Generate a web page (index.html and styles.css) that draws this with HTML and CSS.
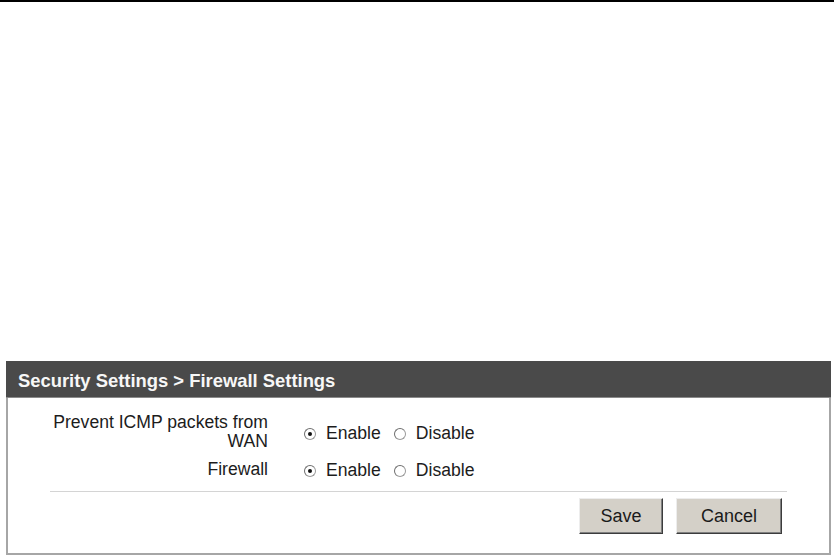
FILE: index.html
```html
<!DOCTYPE html>
<html>
<head>
<meta charset="utf-8">
<title>Firewall Settings</title>
<link rel="stylesheet" href="styles.css">
</head>
<body>
<div class="topline"></div>
<div class="panel">
  <div class="panel-header">Security Settings &gt; Firewall Settings</div>
  <div class="panel-body">
    <div class="rows">
      <div class="form-row">
        <div class="label">Prevent ICMP packets from WAN</div>
        <div class="controls">
          <label class="opt"><span class="radio checked"></span>Enable</label>
          <label class="opt"><span class="radio"></span>Disable</label>
        </div>
      </div>
      <div class="form-row">
        <div class="label">Firewall</div>
        <div class="controls">
          <label class="opt"><span class="radio checked"></span>Enable</label>
          <label class="opt"><span class="radio"></span>Disable</label>
        </div>
      </div>
    </div>
    <div class="divider"></div>
    <div class="actions">
      <button class="btn btn-save">Save</button>
      <button class="btn btn-cancel">Cancel</button>
    </div>
  </div>
</div>
</body>
</html>
```
FILE: styles.css
```css
html, body {
  margin: 0;
  padding: 0;
  background: #ffffff;
}
body {
  font-family: "Liberation Sans", Arial, sans-serif;
  color: #1c1c1c;
}
.topline {
  width: 834px;
  height: 2px;
  background: #000000;
}
.panel {
  margin-top: 359px;
  margin-left: 6px;
  width: 825px;
}
.panel-header {
  height: 37px;
  box-sizing: border-box;
  background: #4a4a4a;
  color: #f7f7f7;
  font-weight: bold;
  font-size: 18.4px;
  padding: 3px 0 0 12px;
  line-height: 34px;
  border-bottom: 1px solid #8a8a8a;
}
.panel-body {
  border: 2px solid #a6a6a6;
  border-top: none;
  height: 157px;
  box-sizing: border-box;
  padding-top: 15px;
}
.rows {
  display: flex;
  flex-direction: column;
  gap: 8px;
}
.form-row {
  display: grid;
  grid-template-columns: 224px auto;
  column-gap: 36px;
  align-items: center;
  padding-left: 36px;
  font-size: 17.6px;
  line-height: 19px;
}
.label {
  text-align: right;
}
.controls {
  display: flex;
  align-items: center;
  gap: 13px;
  padding-top: 2px;
}
.opt {
  display: flex;
  align-items: center;
}
.radio {
  width: 12px;
  height: 12px;
  box-sizing: border-box;
  border-radius: 50%;
  border: 1px solid #9a9a9a;
  border-top-color: #6e6e6e;
  border-left-color: #6e6e6e;
  background: #ffffff;
  margin-right: 10px;
  margin-top: 1px;
  display: flex;
  align-items: center;
  justify-content: center;
}
.radio.checked::after {
  content: "";
  width: 4px;
  height: 4px;
  border-radius: 50%;
  background: #111111;
}
.divider {
  margin: 11px 42px 0 42px;
  height: 1px;
  background: #d4d4d4;
}
.actions {
  display: flex;
  justify-content: flex-end;
  gap: 13px;
  margin-top: 6px;
  margin-right: 47px;
}
.btn {
  height: 36px;
  box-sizing: border-box;
  background: #d4d0c8;
  border: 1px solid;
  border-color: #ededed #3c3c3c #3c3c3c #ededed;
  box-shadow: inset -1px -1px 0 #808080;
  font-family: "Liberation Sans", Arial, sans-serif;
  font-size: 18px;
  color: #1a1a1a;
  padding: 0;
}
.btn-save {
  width: 84px;
}
.btn-cancel {
  width: 106px;
}
```
